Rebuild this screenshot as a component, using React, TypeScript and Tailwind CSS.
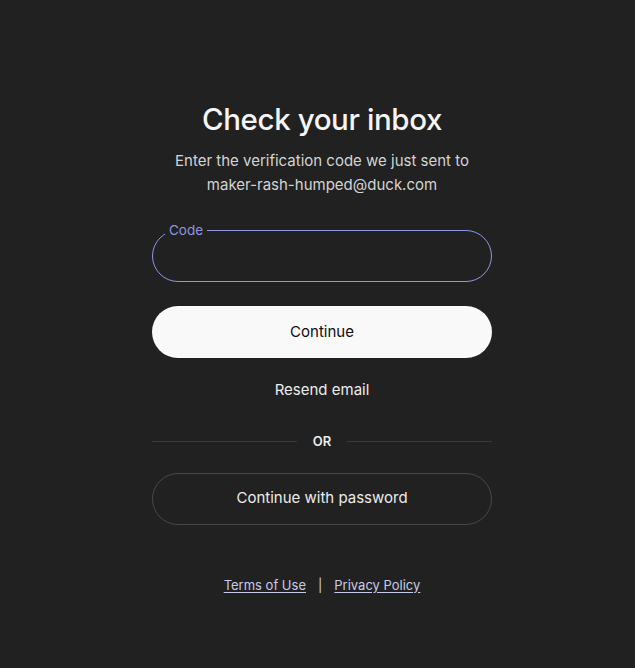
import React from "react";

export default function App() {
  return (
    <div
      className="w-[635px] h-[668px] bg-[#212121] text-white flex flex-col items-center pl-[9px]"
      style={{ fontFamily: "Inter, 'Noto Sans', sans-serif" }}
    >
      <h1 className="mt-[99px] text-[29.5px] leading-[40px] font-medium tracking-[-0.4px] text-[#f5f5f5]">
        Check your inbox
      </h1>
      <p className="mt-[10px] text-[15px] leading-[24px] text-[#d4d4d4] text-center">
        Enter the verification code we just sent to
        <br />
        maker-rash-humped@duck.com
      </p>
      <div className="mt-[33px] w-[340px] relative">
        <div className="h-[52px] rounded-full border border-[#8e96e3]" />
        <span className="absolute left-[13px] top-[-8px] px-[4px] bg-[#212121] text-[13.5px] leading-[16px] text-[#8e96e3]">
          Code
        </span>
      </div>
      <button className="mt-[24px] w-[340px] h-[52px] rounded-full bg-[#f9f9f9] text-[#0d0d0d] text-[15px]">
        Continue
      </button>
      <div className="mt-[22px] text-[15px] leading-[20px] text-[#ececec]">Resend email</div>
      <div className="mt-[32px] w-[340px] flex items-center">
        <div className="flex-1 h-px bg-[#3a3a3a]" />
        <span className="px-[16px] text-[13px] font-semibold text-[#ececec]">OR</span>
        <div className="flex-1 h-px bg-[#3a3a3a]" />
      </div>
      <button className="mt-[21px] w-[340px] h-[52px] rounded-full border border-[#474747] text-[15px] text-[#ececec]">
        Continue with password
      </button>
      <div className="mt-[51px] flex items-center gap-[12px] text-[13px] text-[#c8cbe8]">
        <span className="underline underline-offset-2">Terms of Use</span>
        <span className="text-[#cfd2f0]">|</span>
        <span className="underline underline-offset-2">Privacy Policy</span>
      </div>
    </div>
  );
}
